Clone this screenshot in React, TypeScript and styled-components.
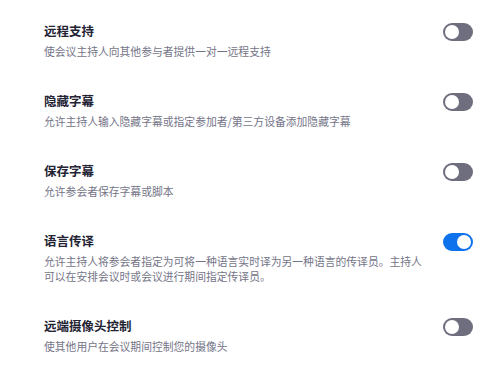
import React, { useState } from "react";
import styled, { createGlobalStyle } from "styled-components";

const GlobalStyle = createGlobalStyle`
  html, body { margin: 0; padding: 0; background: #ffffff; }
  body { font-family: "Noto Sans CJK SC", "Noto Sans", sans-serif; }
`;

const Page = styled.div`
  width: 500px;
  padding: 22px 27px 0 44px;
  box-sizing: border-box;
  display: flex;
  flex-direction: column;
  gap: 33px;
`;

const Row = styled.div`
  display: flex;
  align-items: flex-start;
`;

const TextCol = styled.div`
  flex: 0 0 381px;
  display: flex;
  flex-direction: column;
  gap: 4px;
`;

const Title = styled.div`
  font-size: 12.5px;
  line-height: 18px;
  font-weight: 700;
  color: #232333;
`;

const Desc = styled.div`
  font-size: 10.8px;
  line-height: 15px;
  color: #747487;
`;

const Track = styled.button<{ $on: boolean }>`
  margin-left: auto;
  margin-top: 1px;
  flex: 0 0 auto;
  width: 30px;
  height: 18px;
  border: none;
  padding: 0;
  border-radius: 9px;
  background: ${(p) => (p.$on ? "#0e72ed" : "#6e6e7e")};
  position: relative;
  cursor: pointer;
`;

const Knob = styled.span<{ $on: boolean }>`
  position: absolute;
  top: 2px;
  left: ${(p) => (p.$on ? "14px" : "2px")};
  width: 14px;
  height: 14px;
  border-radius: 50%;
  background: #ffffff;
`;

const items = [
  { title: "远程支持", desc: "使会议主持人向其他参与者提供一对一远程支持", on: false },
  { title: "隐藏字幕", desc: "允许主持人输入隐藏字幕或指定参加者/第三方设备添加隐藏字幕", on: false },
  { title: "保存字幕", desc: "允许参会者保存字幕或脚本", on: false },
  {
    title: "语言传译",
    desc: "允许主持人将参会者指定为可将一种语言实时译为另一种语言的传译员。主持人可以在安排会议时或会议进行期间指定传译员。",
    on: true,
  },
  { title: "远端摄像头控制", desc: "使其他用户在会议期间控制您的摄像头", on: false },
];

export default function App() {
  const [state, setState] = useState(items.map((i) => i.on));
  return (
    <>
      <GlobalStyle />
      <Page>
        {items.map((it, idx) => (
          <Row key={it.title}>
            <TextCol>
              <Title>{it.title}</Title>
              <Desc>{it.desc}</Desc>
            </TextCol>
            <Track
              $on={state[idx]}
              onClick={() => setState((s) => s.map((v, j) => (j === idx ? !v : v)))}
            >
              <Knob $on={state[idx]} />
            </Track>
          </Row>
        ))}
      </Page>
    </>
  );
}
